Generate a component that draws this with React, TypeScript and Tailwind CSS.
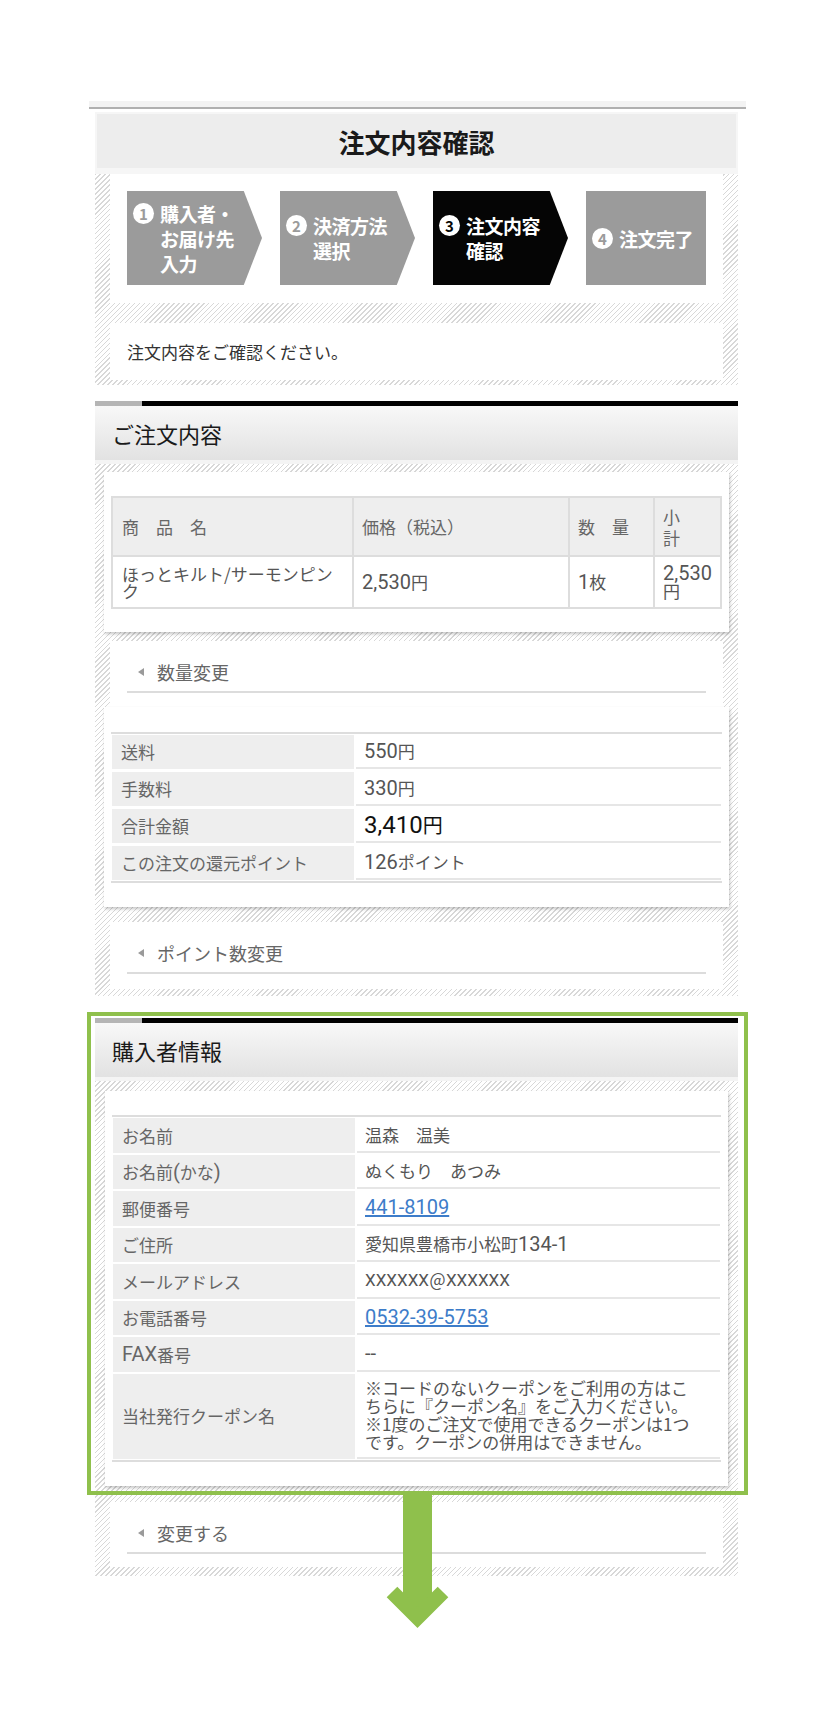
import React from "react";

const hatch =
  "bg-[image:repeating-linear-gradient(135deg,#d8d8d8_0px,#d8d8d8_1px,#ffffff_1px,#ffffff_3.5px)]";

// Latin runs (digits, letters) are drawn larger in Roboto, as in the reference
function mix(s: string, latin = "text-[20px]") {
  return s.split(/([\x21-\x7e]+)/).map((p, i) =>
    i % 2 === 1 ? (
      <span key={i} className={`font-['Roboto',sans-serif] ${latin}`}>
        {p}
      </span>
    ) : (
      p
    ),
  );
}

const steps = [
  { n: "1", lines: ["購入者・", "お届け先", "入力"] },
  { n: "2", lines: ["決済方法", "選択"] },
  { n: "3", lines: ["注文内容", "確認"], active: true },
  { n: "4", lines: ["注文完了"], last: true },
];

function Step({ n, lines, active, last }: { n: string; lines: string[]; active?: boolean; last?: boolean }) {
  const bg = active ? "bg-[#050505]" : "bg-[#9b9b9b]";
  const numColor = active ? "text-[#050505]" : "text-[#9b9b9b]";
  const shape = last
    ? "w-[120px]"
    : "w-[135px] [clip-path:polygon(0_0,86.5%_0,100%_50%,86.5%_100%,0_100%)]";
  return (
    <div className={`h-[94px] flex items-center pl-[6px] ${bg} ${shape}`}>
      <div className="flex items-start gap-[6px]">
        <span
          className={`mt-[2px] w-[21px] h-[21px] rounded-full bg-white flex items-center justify-center text-[15px] font-bold leading-none ${numColor}`}>
          {n}
        </span>
        <div className="text-[19px] font-bold leading-[25px] tracking-[-0.5px] text-white">
          {lines.map((l) => (
            <div key={l}>{l}</div>
          ))}
        </div>
      </div>
    </div>
  );
}

function SectionHeader({ title }: { title: string }) {
  return (
    <div>
      <div className="flex h-[5px]">
        <div className="w-[47px] bg-[#b5b5b5]" />
        <div className="flex-1 bg-black" />
      </div>
      <div className="h-[54px] bg-[image:linear-gradient(#f8f8f8,#e2e2e2)] flex items-center pl-[17px] text-[22px] text-[#1a1a1a]">
        {title}
      </div>
      <div className="h-[4px] bg-[#f4f4f4]" />
    </div>
  );
}

function LinkBlock({ label, h }: { label: string; h: string }) {
  return (
    <div className={`mx-[15px] bg-white px-[17px] pt-[20px] ${h}`}>
      <div className="flex items-center border-b-2 border-[#dcdcdc] pb-[8px] leading-[22px]">
        <span className="ml-[11px] w-0 h-0 border-y-[4px] border-y-transparent border-r-[6px] border-r-[#9a9a9a]" />
        <span className="ml-[13px] text-[18px] text-[#666]">{label}</span>
      </div>
    </div>
  );
}

type Row = { label: string; value: React.ReactNode; strong?: boolean; tall?: boolean };

function InfoTable({ rows, rowH, gap }: { rows: Row[]; rowH: string; gap: string }) {
  return (
    <div className={`border-y-2 border-[#dddddd] py-[1px] px-[1px] flex flex-col ${gap}`}>
      {rows.map((r) => (
        <div key={r.label} className={`flex gap-[2px] ${r.tall ? "h-[85px]" : rowH}`}>
          <div className="w-[242px] shrink-0 bg-[#eeeeee] pl-[9px] flex items-center text-[17px] text-[#666]">
            {mix(r.label)}
          </div>
          <div
            className={`flex-1 border-b-2 border-[#e6e6e6] pl-[8px] flex items-center ${
              r.strong ? "text-[20px] text-[#111]" : "text-[17px] text-[#555]"
            }`}>
            {r.value}
          </div>
        </div>
      ))}
    </div>
  );
}

const feeRows: Row[] = [
  { label: "送料", value: mix("550円") },
  { label: "手数料", value: mix("330円") },
  { label: "合計金額", value: mix("3,410円", "text-[24px]"), strong: true },
  { label: "この注文の還元ポイント", value: mix("126ポイント") },
];

const buyerRows: Row[] = [
  { label: "お名前", value: "温森　温美" },
  { label: "お名前(かな)", value: "ぬくもり　あつみ" },
  {
    label: "郵便番号",
    value: <a className="text-[#3d7cc9] underline font-['Roboto',sans-serif] text-[20px]">441-8109</a>,
  },
  { label: "ご住所", value: mix("愛知県豊橋市小松町134-1") },
  { label: "メールアドレス", value: mix("XXXXXX＠XXXXXX", "text-[17px]") },
  {
    label: "お電話番号",
    value: <a className="text-[#3d7cc9] underline font-['Roboto',sans-serif] text-[20px]">0532-39-5753</a>,
  },
  { label: "FAX番号", value: mix("--") },
  {
    label: "当社発行クーポン名",
    tall: true,
    value: (
      <div className="leading-[18px]">
        ※コードのないクーポンをご利用の方はこ
        <br />
        ちらに『クーポン名』をご入力ください。
        <br />
        ※1度のご注文で使用できるクーポンは1つ
        <br />
        です。クーポンの併用はできません。
      </div>
    ),
  },
];

const cell = "border-2 border-[#dddddd] text-left font-normal pl-[8px]";

export default function App() {
  return (
    <div className="relative w-[835px] min-h-[1729px] bg-white font-['Noto_Sans_CJK_JP','Noto_Sans',sans-serif]">
      <div className="ml-[95px] w-[643px] pt-[101px] pb-[140px]">
        {/* top strip */}
        <div className="ml-[-6px] w-[657px] h-[8px] bg-[#f3f3f3] border-b-2 border-[#b0b0b0]" />

        {/* page title */}
        <div className="mt-[3px] h-[58px] bg-[#ededed] border-2 border-[#f6f6f6] flex items-center justify-center text-[26px] font-bold text-[#1a1a1a]">
          注文内容確認
        </div>
        <div className="h-[4px] bg-[#f6f6f6]" />

        <div className={`${hatch} px-[15px] pb-[5px]`}>
          <div className="bg-white h-[129px] pt-[17px] pl-[17px] flex gap-[18px]">
            {steps.map((s) => (
              <Step key={s.n} {...s} />
            ))}
          </div>
          <div className="mt-[20px] bg-white h-[57px] flex items-center pl-[17px] text-[17px] text-[#333]">
            注文内容をご確認ください。
          </div>
        </div>

        {/* order contents */}
        <div className="mt-[16px]">
          <SectionHeader title="ご注文内容" />
          <div className={`${hatch} pt-[8px] pb-[7px]`}>
            <div className="mx-[9px] bg-white h-[160px] pt-[24px] px-[7px] shadow-[1px_2px_3px_rgba(0,0,0,0.22)]">
              <table className="w-full table-fixed border-collapse text-[17px] text-[#666]">
                <colgroup>
                  <col className="w-[241px]" />
                  <col className="w-[216px]" />
                  <col className="w-[85px]" />
                  <col />
                </colgroup>
                <thead>
                  <tr className="bg-[#eeeeee] h-[59px]">
                    <th className={`${cell} pl-[9px]`}>商　品　名</th>
                    <th className={cell}>価格（税込）</th>
                    <th className={cell}>数　量</th>
                    <th className={`${cell} leading-[21px]`}>
                      小
                      <br />
                      計
                    </th>
                  </tr>
                </thead>
                <tbody className="text-[#555]">
                  <tr className="h-[52px]">
                    <td className={`${cell} pl-[9px] leading-[17.5px]`}>
                      ほっとキルト/サーモンピン
                      <br />ク
                    </td>
                    <td className={cell}>{mix("2,530円")}</td>
                    <td className={cell}>{mix("1枚")}</td>
                    <td className={`${cell} leading-[18px]`}>
                      {mix("2,530")}
                      <br />円
                    </td>
                  </tr>
                </tbody>
              </table>
            </div>
            <div className="mt-[9px]">
              <LinkBlock label="数量変更" h="h-[66px]" />
            </div>
            <div className="mx-[9px] bg-white h-[200px] pt-[25px] px-[7px] shadow-[1px_2px_3px_rgba(0,0,0,0.22)]">
              <InfoTable rows={feeRows} rowH="h-[34px]" gap="gap-[3px]" />
            </div>
            <div className="mt-[15px]">
              <LinkBlock label="ポイント数変更" h="h-[67px]" />
            </div>
          </div>
        </div>

        {/* buyer info */}
        <div className="mt-[22px]">
          <SectionHeader title="購入者情報" />
          <div className={`${hatch} pt-[10px] pb-[9px]`}>
            <div className="mx-[10px] bg-white h-[395px] pt-[24px] px-[7px] shadow-[1px_2px_3px_rgba(0,0,0,0.22)]">
              <InfoTable rows={buyerRows} rowH="h-[34.5px]" gap="gap-[2px]" />
            </div>
            <div className="mt-[16px]">
              <LinkBlock label="変更する" h="h-[65px]" />
            </div>
          </div>
        </div>
      </div>

      {/* highlight annotation */}
      <div className="absolute left-[87px] top-[1012px] w-[661px] h-[483px] border-4 border-[#8fc04c]" />
      <svg className="absolute left-[380px] top-[1495px]" width="76" height="140" viewBox="0 0 76 140">
        <rect x="23" y="0" width="29" height="112" fill="#8fc04c" />
        <polyline
          points="12,97 37.5,122.5 63,97"
          fill="none"
          stroke="#8fc04c"
          strokeWidth="15"
          strokeLinejoin="miter"
          strokeMiterlimit="4"
        />
      </svg>
    </div>
  );
}
